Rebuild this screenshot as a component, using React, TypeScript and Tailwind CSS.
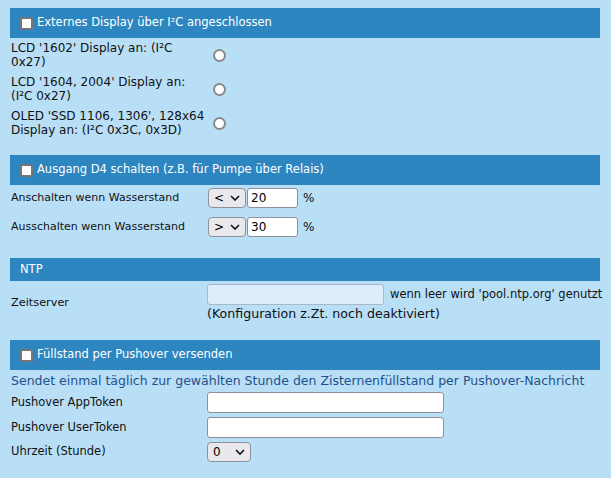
const font = { fontFamily: '"DejaVu Sans", Verdana, sans-serif' };

const Check = () => (
  <span className="inline-block w-[13px] h-[13px] bg-white border-2 border-[#767676] rounded-[2px] mr-[4px] shrink-0" />
);

const Radio = () => (
  <span className="inline-block w-[13px] h-[13px] bg-white border-2 border-[#8a8a8a] rounded-full" />
);

const Chevron = () => (
  <svg width="10" height="6" viewBox="0 0 10 6" className="shrink-0">
    <path d="M1 1l4 4 4-4" fill="none" stroke="#111" strokeWidth="1.6" />
  </svg>
);

const Select = ({ value, w }: { value: string; w: string }) => (
  <span
    className={`inline-flex items-center justify-between h-[20px] ${w} pl-[5px] pr-[5px] bg-[#e9e9ed] border border-[#8f8f9d] rounded-[4px] text-[12px] text-black`}
  >
    {value}
    <Chevron />
  </span>
);

const Header = ({ title, check = true, h = 'h-[30px]' }: { title: string; check?: boolean; h?: string }) => (
  <div className={`flex items-center ${h} bg-[#2e86c1] text-white text-[11.5px] px-[10px]`}>
    {check && <Check />}
    <span>{title}</span>
  </div>
);

export default function App() {
  return (
    <div className="w-[611px] h-[478px] bg-[#b9dff7] text-[#111] pt-[8px] overflow-hidden" style={font}>
      <div className="mx-[10px] w-[590px]">
        {/* Display */}
        <Header title="Externes Display über I²C angeschlossen" />
        <div className="grid grid-cols-[200px_1fr] gap-y-[4px] pt-[2px] text-[12px]">
          <div className="h-[30px] pt-[1px] pl-[1px] leading-[14px]">LCD '1602' Display an: (I²C<br />0x27)</div>
          <div className="flex items-center pl-[3px]"><Radio /></div>
          <div className="h-[30px] pt-[1px] pl-[1px] leading-[14px]">LCD '1604, 2004' Display an:<br />(I²C 0x27)</div>
          <div className="flex items-center pl-[3px]"><Radio /></div>
          <div className="h-[30px] pt-[1px] pl-[1px] leading-[14px]">OLED 'SSD 1106, 1306', 128x64<br />Display an: (I²C 0x3C, 0x3D)</div>
          <div className="flex items-center pl-[3px]"><Radio /></div>
        </div>

        {/* Ausgang D4 */}
        <div className="mt-[17px]">
          <Header title="Ausgang D4 schalten (z.B. für Pumpe über Relais)" />
          <div className="grid grid-cols-[198px_1fr] gap-y-[9px] pt-[3px] text-[11px]">
            <div className="flex items-center pl-[1px]">Anschalten wenn Wasserstand</div>
            <div className="flex items-center">
              <Select value="<" w="w-[38px]" />
              <span className="inline-block w-[51px] h-[20px] ml-px bg-white border border-[#8f8f9d] rounded-[3px] px-[3px] leading-[18px] text-[12px] text-black">20</span>
              <span className="ml-[5px] text-[12px]">%</span>
            </div>
            <div className="flex items-center pl-[1px]">Ausschalten wenn Wasserstand</div>
            <div className="flex items-center">
              <Select value=">" w="w-[38px]" />
              <span className="inline-block w-[51px] h-[20px] ml-px bg-white border border-[#8f8f9d] rounded-[3px] px-[3px] leading-[18px] text-[12px] text-black">30</span>
              <span className="ml-[5px] text-[12px]">%</span>
            </div>
          </div>
        </div>

        {/* NTP */}
        <div className="mt-[21px]">
          <Header title="NTP" check={false} h="h-[23px]" />
          <div className="grid grid-cols-[197px_1fr] pt-[3px]">
            <div className="flex items-center pl-[1px] text-[11.3px]">Zeitserver</div>
            <div>
              <div className="flex items-center">
                <span className="inline-block w-[177px] h-[21px] bg-[#dcedfb] border border-[#a9b8c6] rounded-[3px]" />
                <span className="ml-[6px] text-[11.5px] whitespace-nowrap">wenn leer wird 'pool.ntp.org' genutzt</span>
              </div>
              <div className="text-[12.6px] leading-[18px]">(Konfiguration z.Zt. noch deaktiviert)</div>
            </div>
          </div>
        </div>

        {/* Pushover */}
        <div className="mt-[17px]">
          <Header title="Füllstand per Pushover versenden" />
          <div className="text-[#1f518a] text-[12.5px] leading-[18px] pt-[2px] pl-px whitespace-nowrap">
            Sendet einmal täglich zur gewählten Stunde den Zisternenfüllstand per Pushover-Nachricht
          </div>
          <div className="grid grid-cols-[197px_1fr] gap-y-[4px] pt-[2px] text-[11.5px]">
            <div className="flex items-center pl-[1px]">Pushover AppToken</div>
            <span className="block w-[237px] h-[21px] bg-white border border-[#8f8f9d] rounded-[3px]" />
            <div className="flex items-center pl-[1px]">Pushover UserToken</div>
            <span className="block w-[237px] h-[21px] bg-white border border-[#8f8f9d] rounded-[3px]" />
            <div className="flex items-center pl-[1px]">Uhrzeit (Stunde)</div>
            <div><Select value="0" w="w-[44px]" /></div>
          </div>
        </div>
      </div>
    </div>
  );
}
